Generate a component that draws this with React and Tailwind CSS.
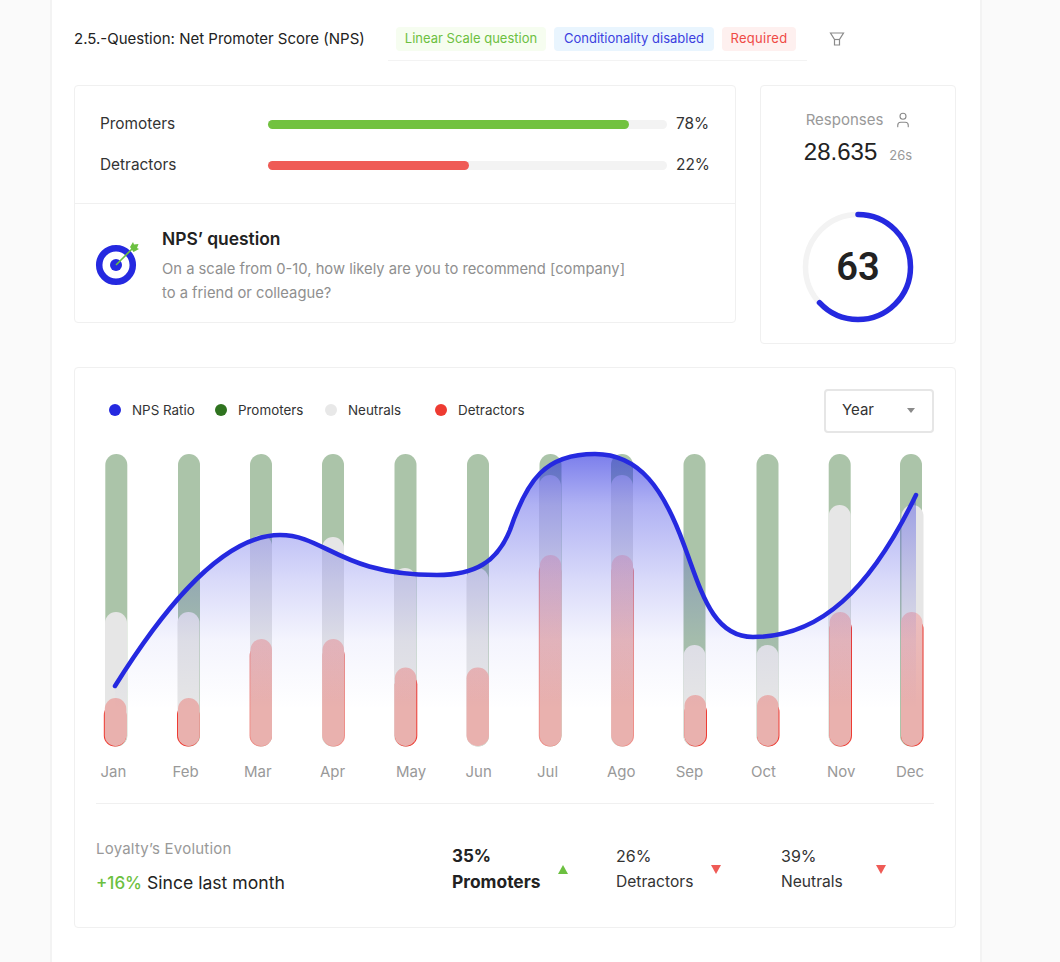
import { User } from 'lucide-react';

// soft = the thin red edge is faint on that bar
const bars = [
  { m: 'Jan', lx: 100.5, g: 105.3, n: 105, nt: 612, r: 103.8, rt: 698, e: 'l' },
  { m: 'Feb', lx: 172.6, g: 178, n: 177.5, nt: 612, r: 177, rt: 698, e: 'l' },
  { m: 'Mar', lx: 244, g: 250, n: 250, nt: 535, r: 249.5, rt: 639, e: 'l', soft: true },
  { m: 'Apr', lx: 320, g: 322, n: 322, nt: 537, r: 322.5, rt: 639, e: 'r', soft: true },
  { m: 'May', lx: 396, g: 394.5, n: 394, nt: 568, r: 394.8, rt: 667.5, e: 'r' },
  { m: 'Jun', lx: 465.5, g: 467, n: 466.5, nt: 568, r: 466.5, rt: 667.5, e: 'n' },
  { m: 'Jul', lx: 537, g: 539.5, n: 539, nt: 475, r: 538.8, rt: 555, e: 'l', soft: true },
  { m: 'Ago', lx: 607, g: 611, n: 611, nt: 475, r: 611.5, rt: 555, e: 'r', soft: true },
  { m: 'Sep', lx: 675.7, g: 683.5, n: 683.5, nt: 645, r: 684.5, rt: 695, e: 'r' },
  { m: 'Oct', lx: 751, g: 756.5, n: 756.5, nt: 645, r: 757, rt: 695, e: 'r' },
  { m: 'Nov', lx: 827, g: 828.7, n: 828.7, nt: 505, r: 829.5, rt: 612, e: 'r' },
  { m: 'Dec', lx: 896, g: 900, n: 901.5, nt: 505, r: 901, rt: 612, e: 'r' },
];

const curve = 'M115 686 C150 630 215 535 280 535 C325 535 340 575 437 575 C475 575 497 562 510 530 C527 480 545 454 595 454 C640 454 664 490 684 545 C701 590 712 637 753 637 C820 637 870 590 916 495';
const BOTTOM = 746.5;

function Bar({ b }) {
  const paleX = b.e === 'l' ? b.r + 1 : b.r;
  return (
    <g>
      <rect x={b.g} y={454} width={22} height={BOTTOM - 454} rx={11} fill="#abc4a9" />
      <rect x={b.n} y={b.nt} width={22} height={BOTTOM - b.nt} rx={11} fill="#e6e6e6" />
      {b.e !== 'n' && <rect x={b.r} y={b.rt + 6} width={22.5} height={BOTTOM - b.rt - 6} rx={11} fill={b.soft ? '#ee8f89' : '#ee3b32'} />}
      <rect x={paleX} y={b.rt} width={b.e === 'n' ? 22.5 : 21.5} height={BOTTOM - b.rt - 0.5} rx={10.8} fill="url(#pale)" />
    </g>
  );
}

function Chart() {
  return (
    <svg viewBox="96 440 838 350" width="838" height="350" className="block">
      <defs>
        <linearGradient id="area" gradientUnits="userSpaceOnUse" x1="0" y1="454" x2="0" y2="710">
          <stop offset="0" stopColor="#2a2fe0" stopOpacity="0.62" />
          <stop offset="0.2" stopColor="#2a2fe0" stopOpacity="0.37" />
          <stop offset="0.49" stopColor="#2a2fe0" stopOpacity="0.18" />
          <stop offset="0.73" stopColor="#2a2fe0" stopOpacity="0.05" />
          <stop offset="1" stopColor="#2a2fe0" stopOpacity="0" />
        </linearGradient>
        <linearGradient id="pale" gradientUnits="userSpaceOnUse" x1="0" y1="555" x2="0" y2="700">
          <stop offset="0" stopColor="#eec6c8" />
          <stop offset="1" stopColor="#e9b1ae" />
        </linearGradient>
      </defs>
      {bars.map((b) => <Bar key={b.m} b={b} />)}
      <path d={`${curve} L916 746 L115 746 Z`} fill="url(#area)" />
      <path d={curve} fill="none" stroke="#2529e0" strokeWidth="4.5" strokeLinecap="round" />
      {bars.map((b) => (
        <text key={b.m} x={b.lx} y={777} className="fill-[#999999] text-[15px]">{b.m}</text>
      ))}
    </svg>
  );
}

function Gauge() {
  const r = 52.5;
  const c = 2 * Math.PI * r;
  return (
    <div className="relative w-[112px] h-[112px]">
      <svg width="112" height="112" viewBox="0 0 112 112" className="-rotate-90">
        <circle cx="56" cy="56" r={r} fill="none" stroke="#f3f3f3" strokeWidth="5.5" />
        <circle cx="56" cy="56" r={r} fill="none" stroke="#2529e0" strokeWidth="5.5" strokeLinecap="round" strokeDasharray={`${c * 0.63} ${c}`} />
      </svg>
      <div className="absolute inset-0 flex items-center justify-center font-[Roboto,sans-serif] text-[38px] font-semibold text-[#222222]">63</div>
    </div>
  );
}

function TargetIcon() {
  return (
    <svg width="46" height="48" viewBox="0 0 46 48" className="shrink-0 mt-[34px]">
      <circle cx="21" cy="27" r="16.8" fill="none" stroke="#2529e0" strokeWidth="6.5" />
      <circle cx="21" cy="27" r="6" fill="#2529e0" />
      <line x1="21" y1="27" x2="38" y2="10" stroke="#6cc040" strokeWidth="1.6" />
      <path d="M35 9 L38 4 L39 6.5 L43.5 6 L42 10 L44 11 L38.5 14 Z" fill="#6cc040" />
    </svg>
  );
}

function FilterIcon() {
  return (
    <svg width="16" height="14" viewBox="0 0 16 14" fill="none" stroke="#8a8a8a" strokeWidth="1.2">
      <path d="M1.5 1 H14.5 L10.5 7.5 V13 H5.5 V7.5 Z" />
      <path d="M5.5 7.5 H10.5" />
    </svg>
  );
}

function Chip({ className, children }) {
  return <span className={`h-[24px] rounded-[4px] flex items-center justify-center text-[13px] ${className}`}>{children}</span>;
}

function ProgressRow({ label, pct, width, color }) {
  return (
    <div className="flex items-center h-[20px]">
      <span className="w-[168px] text-[15.4px] text-[#333333]">{label}</span>
      <div className="w-[399px] h-[9px] rounded-full bg-[#f3f3f3]">
        <div className={`h-full rounded-full ${color}`} style={{ width }} />
      </div>
      <span className="ml-[9px] text-[15.4px] text-[#333333]">{pct}</span>
    </div>
  );
}

function LegendItem({ color, label, className }) {
  return (
    <div className={`flex items-center ${className}`}>
      <span className={`w-[12px] h-[12px] rounded-full ${color}`} />
      <span className="ml-[11px] text-[13.4px] text-[#333333]">{label}</span>
    </div>
  );
}

function Stat({ value, label, up, className, bold }) {
  return (
    <div className={`flex items-center ${className}`}>
      <div className={bold ? 'font-bold text-[17.4px] text-[#222222] w-[106px] leading-[26px]' : 'text-[15.6px] text-[#333333] w-[95px] leading-[25px]'}>
        <div className={bold ? 'text-[17px]' : 'text-[16px]'}>{value}</div>
        <div>{label}</div>
      </div>
      {up
        ? <span className="w-0 h-0 border-x-[5px] border-x-transparent border-b-[9px] border-b-[#6cc040]" />
        : <span className="w-0 h-0 border-x-[5px] border-x-transparent border-t-[9px] border-t-[#ef5b56]" />}
    </div>
  );
}

export default function App() {
  return (
    <div className="w-[1060px] h-[962px] overflow-hidden bg-[#fafafa] pl-[50px] font-[Inter,sans-serif]">
      <div className="w-[932px] h-full bg-white border-x-2 border-[#f3f3f3] pl-[22px] pt-[26px]">
        {/* header */}
        <div className="flex items-start h-[59px]">
          <h1 className="w-[314px] mt-[3px] text-[15px] leading-[20px] font-normal text-[#222222]">2.5.-Question: Net Promoter Score (NPS)</h1>
          <div className="flex gap-[8px] w-[419px] h-[35px] pl-[8px] pt-[1px] border-b border-[#f3f3f3]">
            <Chip className="w-[150px] bg-[#f6fdf0] text-[#6cc040]">Linear Scale question</Chip>
            <Chip className="w-[160px] bg-[#e9f5fe] text-[#3b3fe0]">Conditionality disabled</Chip>
            <Chip className="w-[74px] tracking-[0.02em] bg-[#fef0ef] text-[#ef4a44]">Required</Chip>
          </div>
          <div className="ml-[22px] mt-[6px]"><FilterIcon /></div>
        </div>

        <div className="flex items-start">
          {/* scores + question */}
          <div className="w-[662px] h-[238px] border border-[#f0f0f0] rounded-[4px]">
            <div className="h-[118px] border-b border-[#f0f0f0] pl-[25px] pt-[28px] flex flex-col gap-[21px]">
              <ProgressRow label="Promoters" pct="78%" width="90.6%" color="bg-[#72c240]" />
              <ProgressRow label="Detractors" pct="22%" width="50.4%" color="bg-[#ef5b56]" />
            </div>
            <div className="flex items-start pl-[20px]">
              <TargetIcon />
              <div className="ml-[21px] mt-[23px]">
                <h2 className="text-[17.4px] leading-[24px] font-semibold text-[#222222]">NPS’ question</h2>
                <p className="mt-[6px] text-[14.75px] leading-[24px] text-[#8f8f8f]">On a scale from 0-10, how likely are you to recommend [company]<br />to a friend or colleague?</p>
              </div>
            </div>
          </div>

          {/* responses */}
          <div className="ml-[24px] w-[196px] h-[259px] border border-[#f0f0f0] rounded-[4px] flex flex-col items-center pt-[24px]">
            <div className="flex items-center gap-[11px] pl-[2px] text-[15px] leading-[20px] text-[#999999]">
              Responses <User size={18} strokeWidth={1.5} color="#8a8a8a" />
            </div>
            <div className="flex items-baseline gap-[12px] mt-[7px] leading-[30px]">
              <span className="font-['Liberation_Sans',sans-serif] text-[24px] text-[#222222]">28.635</span>
              <span className="text-[13px] text-[#999999]">26s</span>
            </div>
            <div className="mt-[41px]"><Gauge /></div>
          </div>
        </div>

        {/* chart card */}
        <div className="mt-[23px] w-[882px] h-[561px] border border-[#f0f0f0] rounded-[4px] pl-[21px] pt-[20px]">
          <div className="flex items-center h-[45px] w-[838px]">
            <LegendItem color="bg-[#2529e0]" label="NPS Ratio" className="ml-[13px] w-[106px]" />
            <LegendItem color="bg-[#2f731f]" label="Promoters" className="w-[110px]" />
            <LegendItem color="bg-[#e8e8e8]" label="Neutrals" className="w-[110px]" />
            <LegendItem color="bg-[#ee3b32]" label="Detractors" className="" />
            <div className="ml-auto w-[110px] h-[44px] border-2 border-[#e6e6e6] rounded-[4px] flex items-center justify-between pl-[16px] pr-[17px] text-[15px] text-[#333333]">
              Year
              <span className="w-0 h-0 border-x-[4px] border-x-transparent border-t-[5px] border-t-[#8a8a8a]" />
            </div>
          </div>
          <div className="mt-[7px]"><Chart /></div>
          <div className="w-[838px] border-t border-[#f0f0f0] mt-[13px] pt-[33px] flex items-start">
            <div className="w-[356px] mt-[1px]">
              <div className="text-[15px] tracking-[0.015em] leading-[22px] text-[#999999]">Loyalty’s Evolution</div>
              <div className="mt-[11px] text-[17.6px] leading-[24px] text-[#222222]">
                <span className="text-[17px] text-[#6cc040] font-medium">+16%</span> Since last month
              </div>
            </div>
            <Stat bold up value="35%" label="Promoters" className="w-[164px] mt-[6px]" />
            <Stat value="26%" label="Detractors" className="w-[165px] mt-[7px]" />
            <Stat value="39%" label="Neutrals" className="mt-[7px]" />
          </div>
        </div>
      </div>
    </div>
  );
}
